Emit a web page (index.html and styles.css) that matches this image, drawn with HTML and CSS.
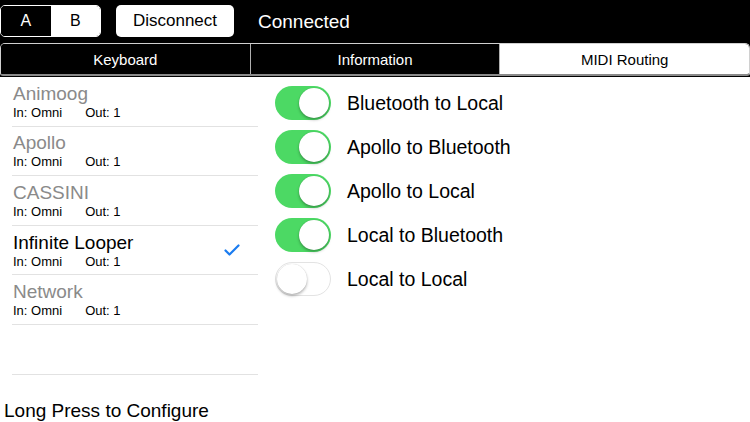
FILE: index.html
```html
<!DOCTYPE html>
<html>
<head>
<meta charset="utf-8">
<link rel="stylesheet" href="styles.css">
</head>
<body>
<div class="app">
  <div class="header">
    <div class="seg">
      <div class="seg-item seg-on">A</div>
      <div class="seg-item seg-off">B</div>
    </div>
    <div class="btn">Disconnect</div>
    <div class="status">Connected</div>
  </div>
  <div class="tabbar">
    <div class="tabs">
      <div class="tab">Keyboard</div>
      <div class="tab">Information</div>
      <div class="tab tab-active">MIDI Routing</div>
    </div>
  </div>
  <div class="main">
    <div class="left">
      <div class="list">
        <div class="row"><div class="info"><div class="name dim">Animoog</div><div class="sub"><span>In: Omni</span><span class="out">Out: 1</span></div></div></div>
        <div class="row"><div class="info"><div class="name dim">Apollo</div><div class="sub"><span>In: Omni</span><span class="out">Out: 1</span></div></div></div>
        <div class="row"><div class="info"><div class="name dim">CASSINI</div><div class="sub"><span>In: Omni</span><span class="out">Out: 1</span></div></div></div>
        <div class="row"><div class="info"><div class="name">Infinite Looper</div><div class="sub"><span>In: Omni</span><span class="out">Out: 1</span></div></div>
          <svg class="check" width="16" height="12" viewBox="0 0 16 12"><path d="M1.5 6.5 L5.5 10.5 L14.5 1.5" fill="none" stroke="#1a7cf0" stroke-width="2.2" stroke-linecap="round" stroke-linejoin="round"/></svg>
        </div>
        <div class="row"><div class="info"><div class="name dim">Network</div><div class="sub"><span>In: Omni</span><span class="out">Out: 1</span></div></div></div>
        <div class="row"></div>
      </div>
      <div class="hint">Long Press to Configure</div>
    </div>
    <div class="right">
      <div class="trow"><div class="toggle on"><div class="knob"></div></div><div class="tlabel">Bluetooth to Local</div></div>
      <div class="trow"><div class="toggle on"><div class="knob"></div></div><div class="tlabel">Apollo to Bluetooth</div></div>
      <div class="trow"><div class="toggle on"><div class="knob"></div></div><div class="tlabel">Apollo to Local</div></div>
      <div class="trow"><div class="toggle on"><div class="knob"></div></div><div class="tlabel">Local to Bluetooth</div></div>
      <div class="trow"><div class="toggle off"><div class="knob"></div></div><div class="tlabel">Local to Local</div></div>
    </div>
  </div>
</div>
</body>
</html>
```
FILE: styles.css
```css
html, body {
  margin: 0;
  padding: 0;
  background: #fff;
}
body {
  font-family: "Liberation Sans", Arial, sans-serif;
  width: 750px;
  height: 422px;
  overflow: hidden;
}
.app {
  width: 750px;
  height: 422px;
}
.header {
  background: #000;
  height: 43px;
  display: flex;
  align-items: flex-start;
}
.seg {
  margin-top: 5px;
  width: 101px;
  height: 32px;
  box-sizing: border-box;
  border: 1px solid #fff;
  border-radius: 5px;
  overflow: hidden;
  display: flex;
}
.seg-item {
  flex: 1;
  display: flex;
  align-items: center;
  justify-content: center;
  font-size: 16px;
}
.seg-on {
  background: #000;
  color: #fff;
}
.seg-off {
  background: #fff;
  color: #000;
}
.btn {
  margin-top: 5px;
  margin-left: 15px;
  width: 118px;
  height: 32px;
  background: #fff;
  color: #000;
  border-radius: 5px;
  display: flex;
  align-items: center;
  justify-content: center;
  font-size: 17px;
}
.status {
  margin-left: 24px;
  margin-top: 11px;
  color: #fff;
  font-size: 19px;
  line-height: 22px;
}
.tabbar {
  background: #000;
  height: 34px;
}
.tabs {
  height: 33px;
  box-sizing: border-box;
  display: flex;
  border: 1px solid #d0d0d0;
  border-bottom: 2px solid #8a8a8a;
  border-radius: 5px 5px 3px 3px;
  overflow: hidden;
}
.tab {
  flex: 1;
  display: flex;
  align-items: center;
  justify-content: center;
  color: #fff;
  background: #000;
  font-size: 15px;
  border-left: 1px solid #b0b0b0;
}
.tab:first-child {
  border-left: none;
}
.tab-active {
  background: #fff;
  color: #000;
}
.main {
  display: flex;
}
.left {
  margin-left: 12px;
  width: 246px;
}
.list {
  display: flex;
  flex-direction: column;
}
.row {
  height: 49.6px;
  box-sizing: border-box;
  border-bottom: 1px solid #e2e2e2;
  display: flex;
  align-items: center;
  justify-content: space-between;
  padding-right: 18px;
}
.info {
  display: flex;
  flex-direction: column;
  padding-top: 1px;
  padding-left: 1px;
}
.name {
  font-size: 19px;
  line-height: 22px;
  color: #000;
}
.name.dim {
  color: #8a8a8a;
}
.sub {
  font-size: 13px;
  line-height: 16px;
  color: #000;
  display: flex;
}
.out {
  margin-left: 23px;
}
.hint {
  margin-left: -8px;
  margin-top: 25px;
  font-size: 19px;
  line-height: 22px;
  color: #000;
}
.right {
  margin-left: 17px;
  padding-top: 4px;
  display: flex;
  flex-direction: column;
}
.trow {
  height: 44px;
  display: flex;
  align-items: center;
}
.toggle {
  width: 56px;
  height: 34px;
  box-sizing: border-box;
  border-radius: 17px;
  position: relative;
}
.toggle.on {
  background: #4cd964;
}
.toggle.off {
  background: #fff;
  border: 1.5px solid #e3e3e3;
}
.knob {
  position: absolute;
  top: 2px;
  width: 30px;
  height: 30px;
  border-radius: 50%;
  background: #fff;
  box-shadow: 0 2px 3px rgba(0,0,0,0.28), 0 0 1px rgba(0,0,0,0.2);
}
.toggle.on .knob {
  right: 2px;
}
.toggle.off .knob {
  left: 0.5px;
  top: 0.5px;
}
.tlabel {
  margin-left: 16px;
  font-size: 19.5px;
  color: #000;
}
```
